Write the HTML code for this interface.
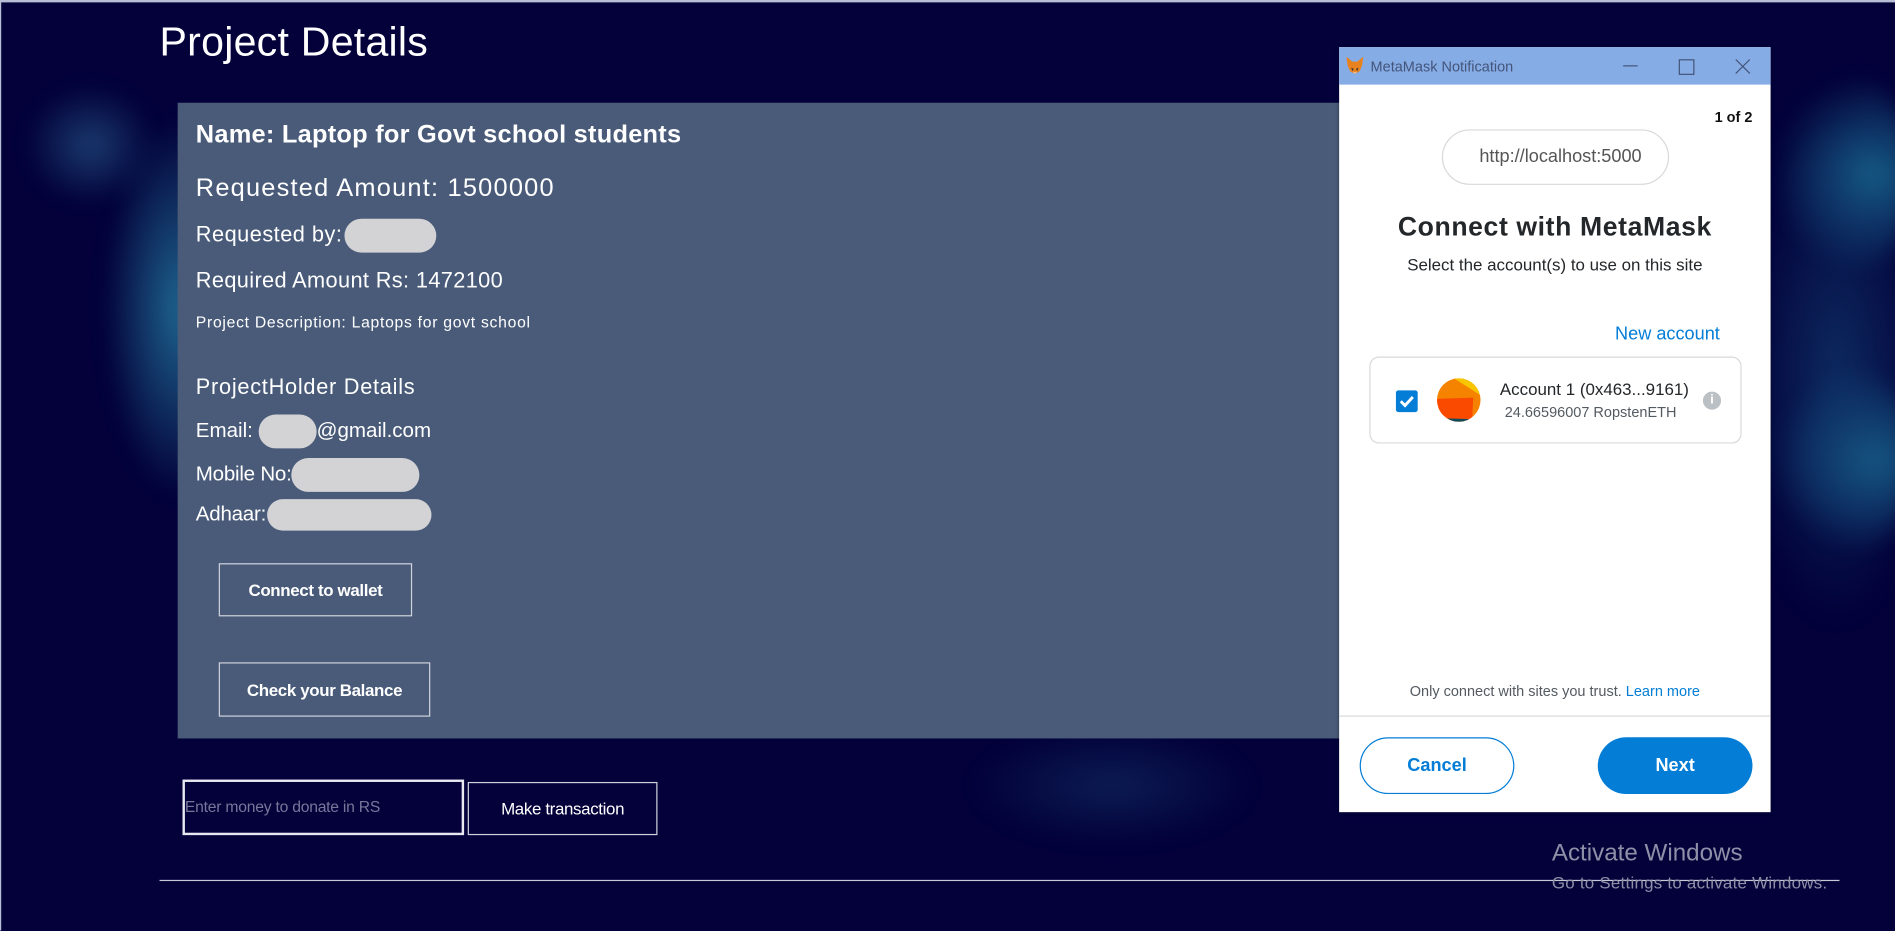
<!DOCTYPE html>
<html><head><meta charset="utf-8"><style>
html,body{margin:0;padding:0;width:1895px;height:931px;overflow:hidden;background:#03003a}
#w{position:absolute;left:0;top:0;width:1568px;height:770px;transform:scale(1.2086);transform-origin:0 0;background:#03003a;font-family:"Liberation Sans",sans-serif;overflow:hidden;box-shadow:inset 1px 2px 0 #b8bed6}
.a{position:absolute;white-space:nowrap}
.glow{position:absolute;border-radius:50%;filter:blur(8px)}
.t{color:#fff}
.blob{display:inline-block;vertical-align:middle;background:#d3d3d6;border-radius:14px}
.btn{position:absolute;border:1px solid #cfd3dc;color:#fff;font-weight:bold;font-size:14px;display:flex;align-items:center;justify-content:center;box-sizing:border-box;letter-spacing:-0.3px}
</style></head><body><div id="w">
<div class="glow" style="left:85px;top:95px;width:80px;height:320px;border-radius:60% 0 0 60%;background:radial-gradient(ellipse at 80% 50%,rgba(50,170,200,.6),rgba(3,0,58,0) 70%)"></div>
<div class="glow" style="left:20px;top:70px;width:110px;height:100px;background:radial-gradient(ellipse,rgba(70,170,210,.35),rgba(3,0,58,0) 70%)"></div>
<div class="glow" style="left:1465px;top:60px;width:120px;height:170px;background:radial-gradient(ellipse at 70% 50%,rgba(40,170,200,.55),rgba(3,0,58,0) 70%)"></div>
<div class="glow" style="left:1465px;top:300px;width:120px;height:160px;background:radial-gradient(ellipse at 70% 50%,rgba(40,170,200,.55),rgba(3,0,58,0) 70%)"></div>
<div class="glow" style="left:1440px;top:100px;width:160px;height:420px;background:radial-gradient(ellipse,rgba(20,70,120,.6),rgba(3,0,58,0) 70%)"></div>
<div class="glow" style="left:800px;top:600px;width:240px;height:100px;background:radial-gradient(ellipse,rgba(40,110,160,.25),rgba(3,0,58,0) 70%)"></div>

<div class="a t" style="left:132px;top:16px;font-size:34px;letter-spacing:0.2px">Project Details</div>

<div class="a" style="left:147px;top:85px;width:1000px;height:526px;background:#495b79"></div>
<div class="a t" style="left:162px;top:100px;font-size:21px;font-weight:bold;letter-spacing:0.2px">Name: Laptop for Govt school students</div>
<div class="a t" style="left:162px;top:144px;font-size:21px;letter-spacing:1px">Requested Amount: 1500000</div>
<div class="a t" style="left:162px;top:181px;font-size:18px;letter-spacing:0.4px">Requested by:<span class="blob" style="width:76px;height:28px;margin-left:2px"></span></div>
<div class="a t" style="left:162px;top:222px;font-size:18px;letter-spacing:0.3px">Required Amount Rs: 1472100</div>
<div class="a t" style="left:162px;top:259px;font-size:13px;letter-spacing:0.6px">Project Description: Laptops for govt school</div>
<div class="a t" style="left:162px;top:310px;font-size:18px;letter-spacing:0.6px">ProjectHolder Details</div>
<div class="a t" style="left:162px;top:343px;font-size:17px;letter-spacing:0px">Email: <span class="blob" style="width:48px;height:28px"></span>@gmail.com</div>
<div class="a t" style="left:162px;top:379px;font-size:17px;letter-spacing:-0.2px">Mobile No:<span class="blob" style="width:106px;height:28px"></span></div>
<div class="a t" style="left:162px;top:413px;font-size:17px;letter-spacing:-0.2px">Adhaar:<span class="blob" style="width:136px;height:26px;margin-left:1px"></span></div>

<div class="btn" style="left:181px;top:466px;width:160px;height:44px">Connect to wallet</div>
<div class="btn" style="left:181px;top:548px;width:175px;height:45px">Check your Balance</div>

<div class="a" style="left:151px;top:645px;width:233px;height:46px;border:2px solid #e8e8f0;box-sizing:border-box;background:#03003a;color:#77779a;font-size:13px;line-height:42px;padding-left:0;letter-spacing:-0.2px">Enter money to donate in RS</div>
<div class="btn" style="left:387px;top:647px;width:157px;height:44px;font-weight:normal;font-size:14px">Make transaction</div>

<div class="a" style="left:132px;top:728px;width:1390px;height:1px;background:#c9c9d6"></div>
<div class="a" style="left:1284px;top:695px;font-size:20px;color:#8f90a8">Activate Windows</div>
<div class="a" style="left:1284px;top:722px;font-size:14px;color:#8f90a8;letter-spacing:0.2px">Go to Settings to activate Windows.</div>

<div class="a" style="left:1108px;top:39px;width:357px;height:633px;background:#fff;box-shadow:0 0 3px rgba(0,0,0,.4)">
 <div style="position:absolute;left:0;top:0;width:357px;height:31px;background:#86ace6"></div>
 <svg style="position:absolute;left:5px;top:8px" width="16" height="15" viewBox="0 0 16 15"><path d="M1 0 L6 4 L10 4 L15 0 L14 7 L12 12 L8 14 L4 12 L2 7Z" fill="#e8821e"/><path d="M5 9 L7 10 L6 12Z M11 9 L9 10 L10 12Z" fill="#333"/><path d="M6 12 L8 13 L10 12 L8 14Z" fill="#f5e0c8"/></svg>
 <div class="a" style="left:26px;top:9px;font-size:12px;color:#44557a">MetaMask Notification</div>
 <div class="a" style="left:235px;top:15px;width:12px;height:1px;background:#44557a"></div>
 <div class="a" style="left:281px;top:10px;width:11px;height:11px;border:1px solid #44557a"></div>
 <svg style="position:absolute;left:328px;top:10px" width="12" height="12"><path d="M0 0L12 12M12 0L0 12" stroke="#44557a" stroke-width="1"/></svg>
 <div class="a" style="right:15px;top:51px;font-size:12px;font-weight:bold;color:#111">1 of 2</div>
 <div class="a" style="left:85px;top:68px;width:188px;height:46px;border:1px solid #d6d9dc;border-radius:23px;box-sizing:border-box;text-align:center;line-height:44px;font-size:15px;color:#555">&nbsp;&nbsp;http://localhost:5000</div>
 <div class="a" style="left:0;width:357px;top:136px;text-align:center;font-size:22px;font-weight:bold;color:#24272a;letter-spacing:0.5px">Connect with MetaMask</div>
 <div class="a" style="left:0;width:357px;top:172px;text-align:center;font-size:14px;color:#24272a">Select the account(s) to use on this site</div>
 <div class="a" style="right:42px;top:229px;font-size:15px;color:#037dd6">New account</div>
 <div class="a" style="left:25px;top:256px;width:308px;height:72px;border:1px solid #d6d9dc;border-radius:8px;box-sizing:border-box"></div>
 <div class="a" style="left:47px;top:284px;width:18px;height:18px;background:#037dd6;border-radius:2px"></div>
 <svg style="position:absolute;left:49px;top:287px" width="14" height="12"><path d="M2 6 L5.5 9.5 L12 2.5" stroke="#fff" stroke-width="2.4" fill="none"/></svg>
 <svg style="position:absolute;left:81px;top:274px" width="36" height="36" viewBox="0 0 36 36"><defs><clipPath id="c"><circle cx="18" cy="18" r="18"/></clipPath></defs><g clip-path="url(#c)"><rect width="36" height="36" fill="#f58300"/><path d="M14 0 L36 0 L36 14Z" fill="#f7c600"/><path d="M0 17 L30 16 L29 36 L0 36Z" fill="#fa4a00"/><path d="M0 33 L36 34 L36 36 L0 36Z" fill="#0f4b5a"/></g></svg>
 <div class="a" style="left:133px;top:275px;font-size:14px;color:#24272a">Account 1 (0x463...9161)</div>
 <div class="a" style="left:137px;top:295px;font-size:12px;color:#535a61">24.66596007 RopstenETH</div>
 <div class="a" style="left:301px;top:285px;width:15px;height:15px;border-radius:50%;background:#bbc0c5;color:#fff;font-size:11px;font-weight:bold;text-align:center;line-height:15px">i</div>
 <div class="a" style="left:0;width:357px;top:526px;text-align:center;font-size:12px;color:#535a61">Only connect with sites you trust. <span style="color:#037dd6">Learn more</span></div>
 <div class="a" style="left:0;top:553px;width:357px;height:1px;background:#d6d9dc"></div>
 <div class="a" style="left:17px;top:571px;width:128px;height:47px;border:1px solid #037dd6;border-radius:24px;box-sizing:border-box;text-align:center;line-height:45px;color:#037dd6;font-size:15px;font-weight:bold">Cancel</div>
 <div class="a" style="left:214px;top:571px;width:128px;height:47px;background:#037dd6;border-radius:24px;text-align:center;line-height:47px;color:#fff;font-size:15px;font-weight:bold">Next</div>
</div>
</div></body></html>
